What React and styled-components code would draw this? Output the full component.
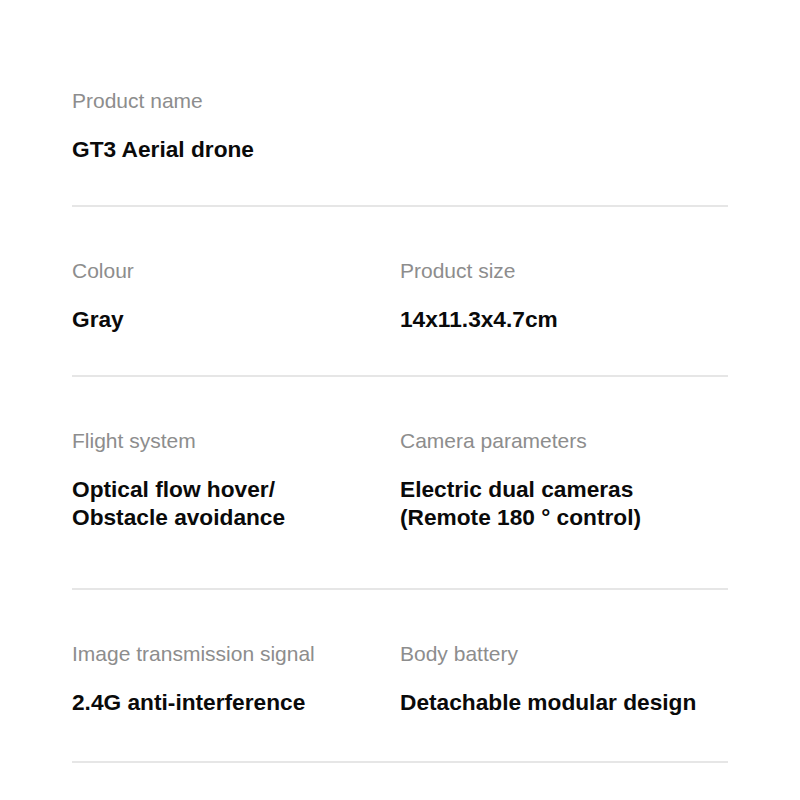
import React from 'react';
import styled, { createGlobalStyle } from 'styled-components';

const GlobalStyle = createGlobalStyle`
  body {
    margin: 0;
    background: #ffffff;
    font-family: "Liberation Sans", Arial, sans-serif;
  }
`;

const Page = styled.main`
  padding: 37px 72px 0;
  width: 656px;
`;

const Row = styled.section`
  display: grid;
  grid-template-columns: 328px 1fr;
  padding: 52px 0 ${(p) => p.$bottom || 42}px;
  border-bottom: 2px solid #e6e6e6;
`;

const Cell = styled.div`
  display: flex;
  flex-direction: column;
  gap: 22px;
`;

const Label = styled.div`
  font-size: 21px;
  line-height: 24px;
  color: #8d8d8d;
`;

const Value = styled.div`
  font-size: 22.7px;
  line-height: 28px;
  font-weight: 700;
  color: #0a0a0a;
`;

const rows = [
  { items: [['Product name', ['GT3 Aerial drone']]] },
  {
    items: [
      ['Colour', ['Gray']],
      ['Product size', ['14x11.3x4.7cm']],
    ],
  },
  {
    bottom: 57,
    items: [
      ['Flight system', ['Optical flow hover/', 'Obstacle avoidance']],
      ['Camera parameters', ['Electric dual cameras', '(Remote 180 ° control)']],
    ],
  },
  {
    bottom: 45,
    items: [
      ['Image transmission signal', ['2.4G anti-interference']],
      ['Body battery', ['Detachable modular design']],
    ],
  },
];

export default function App() {
  return (
    <>
      <GlobalStyle />
      <Page>
        {rows.map((row, i) => (
          <Row key={i} $bottom={row.bottom}>
            {row.items.map(([label, lines]) => (
              <Cell key={label}>
                <Label>{label}</Label>
                <Value>
                  {lines.map((l) => (
                    <div key={l}>{l}</div>
                  ))}
                </Value>
              </Cell>
            ))}
          </Row>
        ))}
      </Page>
    </>
  );
}
